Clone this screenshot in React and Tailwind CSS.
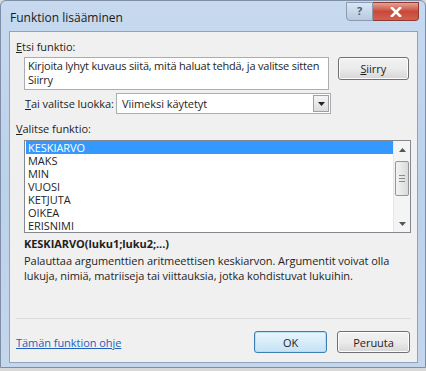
import React from "react";

const items = ["KESKIARVO", "MAKS", "MIN", "VUOSI", "KETJUTA", "OIKEA", "ERISNIMI"];

const Btn = ({ children, primary, className = "" }) => (
  <div
    className={`flex items-center justify-center rounded-[3px] border text-[11px] text-[#1e1e1e] ${
      primary
        ? "border-[#3c7fb1] bg-gradient-to-b from-[#eaf6fd] to-[#c4e2f5] shadow-[inset_0_0_0_1px_#b8ddf5]"
        : "border-[#707070] bg-gradient-to-b from-[#f2f2f2] via-[#ebebeb] to-[#d6d6d6] shadow-[inset_0_0_0_1px_#fcfcfc]"
    } ${className}`}
  >
    {children}
  </div>
);

export default function App() {
  return (
    <div
      className="w-[426px] h-[371px] overflow-hidden bg-[#d8d8d8]"
      style={{ fontFamily: '"Open Sans", "Noto Sans", sans-serif' }}
    >
      <div className="w-[426px] h-[368px] rounded-t-[6px] border border-[#7d8ea6] bg-gradient-to-b from-[#c6d9ef] via-[#bcd2eb] to-[#c3d6ec] flex flex-col pl-[8px] pr-[7px] pb-[4px]">
        {/* title bar */}
        <div className="h-[30px] flex items-start justify-between">
          <div className="pt-[8px] pl-[1px] text-[12px] text-[#1a1a1a]">Funktion lisääminen</div>
          <div className="flex mt-[1px] mr-[-1px]">
            <div className="w-[27px] h-[19px] rounded-bl-[4px] border border-[#8a9ab1] bg-gradient-to-b from-[#dbe6f3] to-[#b7c9df] flex items-center justify-center text-[11px] font-bold text-[#4a5c78]">
              ?
            </div>
            <div className="w-[46px] h-[19px] rounded-br-[4px] border border-l-0 border-[#8d3a33] bg-gradient-to-b from-[#e4a195] via-[#c8493a] to-[#d2604f] flex items-center justify-center">
              <svg width="12" height="10" viewBox="0 0 12 10">
                <path d="M2 1 L10 9 M10 1 L2 9" stroke="#fff" strokeWidth="2.6" strokeLinecap="square" />
              </svg>
            </div>
          </div>
        </div>

        {/* content */}
        <div className="flex-1 bg-[#f0f0f0] border border-[#8fa3be] flex flex-col text-[11px] tracking-[-0.05px] text-[#1e1e1e] leading-[15px]">
          <div className="pl-[6px] pt-[7px] h-[25px]">
            <span className="underline">E</span>tsi funktio:
          </div>
          <div className="flex pl-[14px] pr-[8px] gap-[9px]">
            <div className="w-[307px] h-[33px] border border-[#abadb3] bg-white pl-[3px] pt-[1px] leading-[13.5px] tracking-[-0.2px]">
              Kirjoita lyhyt kuvaus siitä, mitä haluat tehdä, ja valitse sitten Siirry
            </div>
            <Btn className="w-[72px] h-[23px]">
              <span>
                <span className="underline">S</span>iirry
              </span>
            </Btn>
          </div>
          <div className="flex items-center pl-[15px] mt-[3px] h-[21px]">
            <div className="w-[91px] whitespace-nowrap">
              <span className="underline">T</span>ai valitse luokka:
            </div>
            <div className="w-[215px] h-[21px] border border-[#abadb3] bg-white flex items-center justify-between pl-[5px] pr-[1px]">
              <span>Viimeksi käytetyt</span>
              <div className="w-[16px] h-[17px] border border-[#a0a0a0] bg-gradient-to-b from-[#f4f4f4] to-[#dcdcdc] flex items-center justify-center">
                <svg width="7" height="4" viewBox="0 0 7 4">
                  <path d="M0 0 H7 L3.5 4 Z" fill="#222" />
                </svg>
              </div>
            </div>
          </div>
          <div className="pl-[6px] mt-[7px] h-[19px]">
            <span className="underline">V</span>alitse funktio:
          </div>
          <div className="ml-[14px] w-[387px] h-[93px] border border-[#828790] bg-white flex overflow-hidden">
            <div className="flex-1 pl-[1px] leading-[13px]">
              {items.map((it, i) => (
                <div
                  key={it}
                  className={`h-[13px] pl-[2px] ${i === 0 ? "bg-[#3399ff] text-white" : ""}`}
                >
                  {it}
                </div>
              ))}
            </div>
            <div className="w-[17px] flex flex-col items-center bg-[#f4f4f4] border-l border-[#e6e6e6]">
              <div className="h-[17px] flex items-center justify-center">
                <svg width="7" height="4" viewBox="0 0 7 4">
                  <path d="M0 4 H7 L3.5 0 Z" fill="#555" />
                </svg>
              </div>
              <div className="w-[14px] h-[35px] mt-[3px] rounded-[2px] border border-[#959595] bg-gradient-to-r from-[#f3f3f3] to-[#dadada] flex flex-col items-center justify-center gap-[2px]">
                <div className="w-[6px] h-px bg-[#8a8a8a]" />
                <div className="w-[6px] h-px bg-[#8a8a8a]" />
                <div className="w-[6px] h-px bg-[#8a8a8a]" />
              </div>
              <div className="flex-1" />
              <div className="h-[17px] flex items-center justify-center">
                <svg width="7" height="4" viewBox="0 0 7 4">
                  <path d="M0 0 H7 L3.5 4 Z" fill="#555" />
                </svg>
              </div>
            </div>
          </div>
          <div className="pl-[14px] mt-[3px] font-bold">KESKIARVO(luku1;luku2;...)</div>
          <div className="pl-[14px] mt-[2px] pr-[20px]">
            Palauttaa argumenttien aritmeettisen keskiarvon. Argumentit voivat olla lukuja, nimiä, matriiseja tai viittauksia, jotka kohdistuvat lukuihin.
          </div>
          <div className="flex-1" />
          <div className="mx-[6px] border-t border-[#dcdcdc]" />
          <div className="flex items-center justify-between pl-[6px] pr-[7px] pt-[12px] pb-[9px]">
            <span className="text-[#1f5fbf] underline">Tämän funktion ohje</span>
            <div className="flex gap-[10px]">
              <Btn primary className="w-[73px] h-[22px]">OK</Btn>
              <Btn className="w-[73px] h-[22px]">Peruuta</Btn>
            </div>
          </div>
        </div>
      </div>
    </div>
  );
}
